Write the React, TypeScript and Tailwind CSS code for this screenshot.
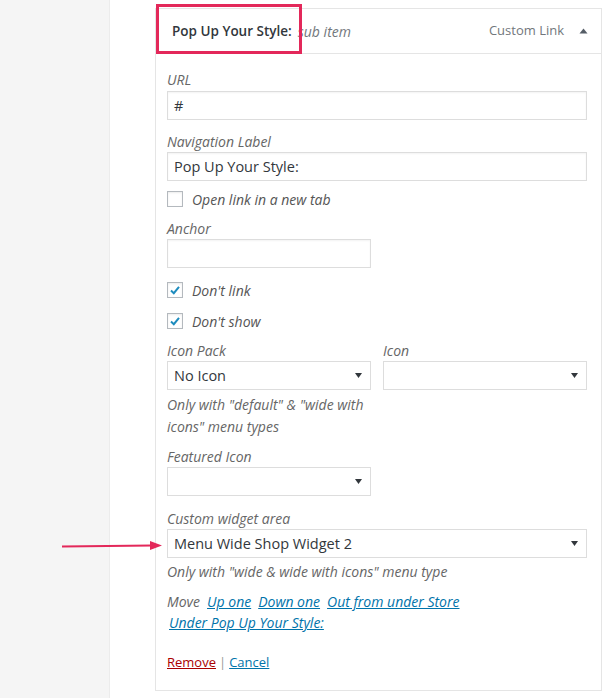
import React from 'react'

const font = { fontFamily: '"Open Sans", "Noto Sans", sans-serif' }

function Caret() {
  return (
    <svg width="7" height="5" viewBox="0 0 7 5" className="shrink-0">
      <path d="M0 0 L7 0 L3.5 5 Z" fill="#32373c" />
    </svg>
  )
}

function Check({ checked, label }: { checked?: boolean; label: string }) {
  return (
    <div className="flex items-center h-5 gap-[9px]">
      <span className="w-4 h-4 border border-[#b4b9be] bg-white shadow-[inset_0_1px_2px_rgba(0,0,0,0.08)] flex items-center justify-center">
        {checked && (
          <svg width="12" height="12" viewBox="0 0 12 12">
            <path d="M2 6.5 L4.8 9.2 L10 2.8" fill="none" stroke="#1e8cbe" strokeWidth="2" />
          </svg>
        )}
      </span>
      <span className="italic text-[14px] text-[#555]">{label}</span>
    </div>
  )
}

function Label({ children }: { children: React.ReactNode }) {
  return <div className="italic text-[14px] leading-5 text-[#666]">{children}</div>
}

function TextInput({ value, className = '' }: { value?: string; className?: string }) {
  return (
    <div
      className={`h-[29px] border border-[#dddddd] shadow-[inset_0_1px_2px_rgba(0,0,0,0.05)] bg-white flex items-center px-[6px] text-[14.5px] text-[#32373c] ${className}`}
    >
      {value}
    </div>
  )
}

function Select({ value, className = '' }: { value?: string; className?: string }) {
  return (
    <div
      className={`h-[29px] border border-[#dddddd] bg-white flex items-center justify-between pl-[6px] pr-[8px] text-[14.5px] text-[#32373c] ${className}`}
    >
      <span>{value}</span>
      <Caret />
    </div>
  )
}

export default function App() {
  return (
    <div className="flex w-[614px] h-[698px] bg-white overflow-hidden relative" style={font}>
      <div className="w-[110px] shrink-0 bg-[#f5f5f5] border-r border-[#ececec]" />

      <div className="pl-[45px] pt-[8px]">
        <div className="w-[447px] border border-[#e5e5e5] bg-white">
          <div className="h-[45px] border-b border-[#e5e5e5] flex items-center pl-4 pr-[13px]">
            <span className="font-semibold text-[13.5px] text-[#32373c]">Pop Up Your Style:</span>
            <span className="italic text-[14px] text-[#72777c] ml-[6px]">sub item</span>
            <span className="ml-auto text-[13px] text-[#72777c]">Custom Link</span>
            <svg width="9" height="6" viewBox="0 0 9 6" className="ml-[15px]">
              <path d="M0.5 5.5 L8.5 5.5 L4.5 0.5 Z" fill="#555d66" />
            </svg>
          </div>

          <div className="pl-[11px] pr-[14px] pt-[16px] pb-[18px]">
            <Label>URL</Label>
            <TextInput value="#" className="mt-[1px]" />

            <div className="mt-[12px]">
              <Label>Navigation Label</Label>
            </div>
            <TextInput value="Pop Up Your Style:" />

            <div className="mt-[8px]">
              <Check label="Open link in a new tab" />
            </div>

            <div className="mt-[10px]">
              <Label>Anchor</Label>
            </div>
            <TextInput className="w-[204px]" />

            <div className="mt-[12px]">
              <Check checked label="Don't link" />
            </div>
            <div className="mt-[11px]">
              <Check checked label="Don't show" />
            </div>

            <div className="mt-[10px] flex gap-[12px]">
              <div className="w-[204px]">
                <Label>Icon Pack</Label>
                <Select value="No Icon" />
              </div>
              <div className="w-[204px]">
                <Label>Icon</Label>
                <Select />
              </div>
            </div>
            <p className="mt-[4px] w-[204px] italic text-[14px] leading-[22px] text-[#666]">
              Only with "default" &amp; "wide with icons" menu types
            </p>

            <div className="mt-[9px]">
              <Label>Featured Icon</Label>
            </div>
            <Select className="w-[204px]" />

            <div className="mt-[13px]">
              <Label>Custom widget area</Label>
            </div>
            <Select value="Menu Wide Shop Widget 2" />
            <p className="mt-[4px] italic text-[14px] leading-5 text-[#666]">
              Only with "wide &amp; wide with icons" menu type
            </p>

            <div className="mt-[9px] italic text-[14px] leading-[21px] text-[#666]">
              <span className="mr-[7px]">Move</span>
              <a className="text-[#0073aa] underline mr-[7px]">Up one</a>
              <a className="text-[#0073aa] underline mr-[7px]">Down one</a>
              <a className="text-[#0073aa] underline">Out from under Store</a>
              <div>
                <a className="text-[#0073aa] underline ml-[2px]">Under Pop Up Your Style:</a>
              </div>
            </div>

            <div className="mt-[19px] text-[13px] leading-5 text-[#999]">
              <a className="text-[#a00] underline">Remove</a>
              <span className="mx-[3px]">|</span>
              <a className="text-[#0073aa] underline">Cancel</a>
            </div>
          </div>
        </div>
      </div>

      {/* annotations */}
      <div className="absolute left-[156px] top-[4px] w-[146px] h-[50px] border-[3px] border-[#e3285a] pointer-events-none" />
      <svg className="absolute left-[60px] top-[539px]" width="104" height="14" viewBox="0 0 104 14">
        <path d="M2 7.5 L92 6.5" stroke="#e3285a" strokeWidth="2" />
        <path d="M90 2 L102 6.5 L90 11 Z" fill="#e3285a" />
      </svg>
    </div>
  )
}
